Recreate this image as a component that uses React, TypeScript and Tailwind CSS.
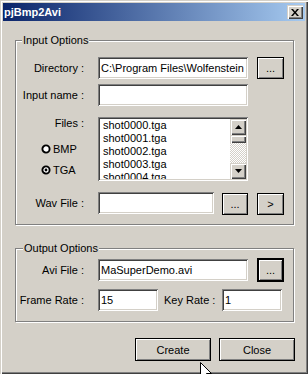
import React from "react";

const sunken =
  "bg-white shadow-[inset_1px_1px_0_#808080,inset_-1px_-1px_0_#ffffff,inset_2px_2px_0_#404040,inset_-2px_-2px_0_#d4d0c8]";
const btn =
  "flex items-center justify-center bg-[#d4d0c8] border border-black shadow-[inset_1px_1px_0_#ffffff,inset_-1px_-1px_0_#808080]";
const raised =
  "bg-[#d4d0c8] shadow-[inset_1px_1px_0_#d4d0c8,inset_2px_2px_0_#ffffff,inset_-1px_-1px_0_#404040,inset_-2px_-2px_0_#808080]";

function Label({ children }: { children: React.ReactNode }) {
  return <div className="w-[68px] text-right leading-[14px] whitespace-nowrap">{children}</div>;
}

function TextBox({ value, w }: { value?: string; w: string }) {
  return (
    <div className={`${sunken} ${w} h-[22px] flex items-center pl-[3px] leading-[14px] whitespace-nowrap overflow-hidden`}>
      {value}
    </div>
  );
}

function Radio({ checked, label }: { checked?: boolean; label: string }) {
  return (
    <div className="flex items-center h-[14px] leading-[14px]">
      <svg width="12" height="12" viewBox="0 0 12 12" className="ml-[24px]">
        <circle cx="6" cy="6" r="3.6" fill="#fff" stroke="#000" strokeWidth="1.9" />
        {checked && <circle cx="6" cy="6" r="1.4" fill="#000" />}
      </svg>
      <span className="ml-[1px]">{label}</span>
    </div>
  );
}

function Arrow({ up }: { up?: boolean }) {
  return (
    <div className={`${raised} w-[16px] h-[16px] flex items-center justify-center`}>
      <svg width="7" height="4" viewBox="0 0 7 4">
        {up ? <polygon points="3.5,0 7,4 0,4" fill="#000" /> : <polygon points="0,0 7,0 3.5,4" fill="#000" />}
      </svg>
    </div>
  );
}

export default function App() {
  const files = ["shot0000.tga", "shot0001.tga", "shot0002.tga", "shot0003.tga", "shot0004.tga"];
  return (
    <div className="relative w-[308px] h-[374px] overflow-hidden bg-[#d4d0c8] pt-[3px] px-[3px] flex flex-col text-[11px] text-black font-['Liberation_Sans',Arial,sans-serif] shadow-[inset_1px_1px_0_#d4d0c8,inset_2px_2px_0_#ffffff,inset_-1px_-1px_0_#404040,inset_-2px_-2px_0_#808080]">
      {/* Title bar */}
      <div className="h-[18px] flex items-center justify-between bg-[linear-gradient(to_right,#0a246a,#a6caf0)]">
        <span className="pl-[1px] text-white font-bold text-[11px] leading-[14px]">pjBmp2Avi</span>
        <div className={`${raised} w-[16px] h-[14px] mr-[2px] flex items-center justify-center`}>
          <svg width="8" height="7" viewBox="0 0 8 7">
            <path d="M0 0h2l2 2.5L6 0h2L5 3.5 8 7H6L4 4.5 2 7H0l3-3.5z" fill="#000" />
          </svg>
        </div>
      </div>

      {/* Input Options */}
      <div className="relative mt-[19px] ml-[12px] w-[279px] border border-[#808080] shadow-[1px_1px_0_#ffffff,inset_1px_1px_0_#ffffff] pt-[16px] pb-[9px] flex flex-col">
        <span className="absolute left-[6px] top-[-8px] px-[1px] bg-[#d4d0c8] leading-[14px]">Input Options</span>

        <div className="flex items-center h-[22px]">
          <Label>Directory :</Label>
          <div className="ml-[14px]">
            <TextBox w="w-[150px]" value="C:\Program Files\Wolfenstein" />
          </div>
          <div className={`${btn} ml-[9px] w-[27px] h-[22px] leading-[14px]`}>...</div>
        </div>

        <div className="flex items-center h-[22px] mt-[5px]">
          <Label>Input name :</Label>
          <div className="ml-[14px]">
            <TextBox w="w-[150px]" />
          </div>
        </div>

        <div className="flex items-start mt-[11px]">
          <div className="w-[82px] flex flex-col">
            <div className="-mt-px">
              <Label>Files :</Label>
            </div>
            <div className="mt-[12px]">
              <Radio label="BMP" />
            </div>
            <div className="mt-[7px]">
              <Radio checked label="TGA" />
            </div>
          </div>
          <div className={`${sunken} w-[150px] h-[64px] p-[2px] flex`}>
            <div className="flex-1 overflow-hidden pl-[3px] leading-[13px]">
              {files.map((f) => (
                <div key={f} className="whitespace-nowrap">{f}</div>
              ))}
            </div>
            <div className="w-[16px] flex flex-col">
              <Arrow up />
              <div className={`${raised} h-[8px]`} />
              <div className="flex-1 bg-[repeating-conic-gradient(#ffffff_0_25%,#d4d0c8_0_50%)] bg-[length:2px_2px]" />
              <Arrow />
            </div>
          </div>
        </div>

        <div className="flex items-start h-[23px] mt-[11px]">
          <div className="h-[22px] flex items-center">
            <Label>Wav File :</Label>
          </div>
          <div className="ml-[14px]">
            <TextBox w="w-[116px]" />
          </div>
          <div className={`${btn} ml-[8px] mt-[1px] w-[26px] h-[22px] leading-[14px]`}>...</div>
          <div className={`${btn} ml-[9px] mt-[1px] w-[27px] h-[22px] leading-[14px]`}>&gt;</div>
        </div>
      </div>

      {/* Output Options */}
      <div className="relative mt-[23px] ml-[12px] w-[279px] border border-[#808080] shadow-[1px_1px_0_#ffffff,inset_1px_1px_0_#ffffff] pt-[9px] pb-[10px] flex flex-col">
        <span className="absolute left-[7px] top-[-8px] px-[1px] bg-[#d4d0c8] leading-[14px]">Output Options</span>

        <div className="flex items-center h-[24px]">
          <Label>Avi File :</Label>
          <div className="ml-[14px]">
            <TextBox w="w-[150px]" value="MaSuperDemo.avi" />
          </div>
          <div className="ml-[9px] w-[27px] h-[24px] border-2 border-black bg-[#d4d0c8] shadow-[inset_1px_1px_0_#ffffff,inset_-1px_-1px_0_#808080] flex items-center justify-center leading-[14px]">
            ...
          </div>
        </div>

        <div className="flex items-center h-[22px] mt-[7px]">
          <Label>Frame Rate :</Label>
          <div className="ml-[14px]">
            <TextBox w="w-[60px]" value="15" />
          </div>
          <div className="ml-[6px] w-[50px] leading-[14px] whitespace-nowrap">Key Rate :</div>
          <div className="ml-[8px]">
            <TextBox w="w-[60px]" value="1" />
          </div>
        </div>
      </div>

      {/* Buttons */}
      <div className="flex justify-end mt-[16px] mr-[10px] gap-[8px]">
        <div className={`${btn} w-[76px] h-[23px] leading-[14px]`}>Create</div>
        <div className={`${btn} w-[76px] h-[23px] leading-[14px]`}>Close</div>
      </div>

      {/* Mouse cursor */}
      <svg className="absolute left-[200px] top-[362px]" width="13" height="21" viewBox="0 0 13 21">
        <path d="M0.5 0.5 L0.5 16.5 L4.5 12.5 L7.5 19.5 L9.5 18.5 L6.5 11.5 L11.5 11.5 Z" fill="#fff" stroke="#000" strokeWidth="1" />
      </svg>
    </div>
  );
}
